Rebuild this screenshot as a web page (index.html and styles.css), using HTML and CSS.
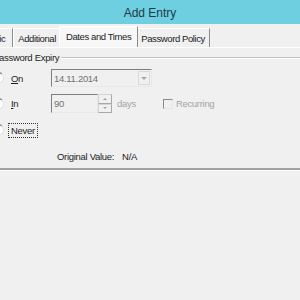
FILE: index.html
```html
<!DOCTYPE html>
<html lang="en">

<head>
    <meta charset="UTF-8">
    <title>Add Entry</title>
    <link rel="stylesheet" href="styles.css">
</head>

<body>

    <div class="titlebar">Add Entry</div>

    <div class="tabs">
        <div class="tab first">Basic</div>
        <div class="tab">Additional</div>
        <div class="tab active">Dates and Times</div>
        <div class="tab">Password Policy</div>
    </div>

    <div class="page">
        <div class="group">
            <div class="group-head">
                <span class="legend">Password Expiry</span>
                <span class="etch"></span>
            </div>

            <div class="rows">
                <span class="radio"></span>
                <span class="lbl"><u>O</u>n</span>
                <div class="ctrl">
                    <div class="combo">
                        <span class="value">14.11.2014</span>
                        <span class="drop"><span class="arrow"></span></span>
                    </div>
                </div>

                <span class="radio"></span>
                <span class="lbl"><u>I</u>n</span>
                <div class="ctrl">
                    <div class="spin">
                        <span class="value">90</span>
                    </div>
                    <div class="spin-btns">
                        <span class="sbtn"><span class="up"></span></span>
                        <span class="sbtn"><span class="down"></span></span>
                    </div>
                    <span class="days">days</span>
                    <span class="check"></span>
                    <span class="recurring">Recurring</span>
                </div>

                <span class="radio checked"></span>
                <span class="lbl"><span class="focus">Never</span></span>
                <div class="ctrl"></div>

                <div class="original">
                    <span>Original Value:</span>
                    <span>N/A</span>
                </div>
            </div>
        </div>
        <div class="group-end"></div>
    </div>

</body>

</html>
```

FILE: styles.css
```css
* {
    margin: 0;
    padding: 0;
    box-sizing: border-box;
}

body {
    width: 300px;
    height: 300px;
    overflow: hidden;
    background: #f0f0f0;
    font-family: "Liberation Sans", Arial, sans-serif;
    font-size: 9.5px;
    letter-spacing: -0.3px;
    color: #1c1c1c;
}

.titlebar {
    height: 24px;
    background: #6dcfe0;
    color: #23394a;
    font-size: 12px;
    letter-spacing: 0;
    display: flex;
    justify-content: center;
    align-items: center;
    padding-top: 1px;
}

/* tab strip */
.tabs {
    display: flex;
    align-items: flex-end;
    height: 23px;
    margin-left: -21px;
    letter-spacing: -0.4px;
}

.tab {
    height: 19px;
    padding: 1px 4px 0 4px;
    display: flex;
    align-items: center;
    border-left: 1px solid #ffffff;
    border-top: 1px solid #ffffff;
    border-right: 1px solid #8c8c8c;
}

.tab.first {
    padding-right: 7px;
}

.tab.active {
    height: 21px;
    margin: 0 -2px;
    padding: 0 6px 2px 6px;
    background: #f7f7f7;
    position: relative;
}

.page {
    border-top: 1px solid #ffffff;
}

/* group box */
.group {
    margin: 3px 0 0 -14px;
}

.group-end {
    height: 3px;
    border-top: 2px solid #a2a2a2;
    border-bottom: 1px solid #ffffff;
}

.group-head {
    display: flex;
    align-items: center;
    height: 13px;
    padding-left: 7px;
}

.legend {
    padding-right: 2px;
}

.etch {
    flex: 1;
    border-top: 1px solid #c4c4c4;
    border-bottom: 1px solid #ffffff;
}

.rows {
    display: grid;
    grid-template-columns: 12px 33px 1fr;
    grid-template-rows: 26px 25px 28px 24px;
    column-gap: 7px;
    align-items: center;
    padding-top: 1px;
    padding-left: 6px;
}

.radio {
    width: 12px;
    height: 12px;
    border-radius: 50%;
    border: 1px solid #7a7a7a;
    border-right-color: #e0e0e0;
    border-bottom-color: #e0e0e0;
    background: #ffffff;
    display: flex;
    justify-content: center;
    align-items: center;
}

.radio.checked::after {
    content: "";
    width: 4px;
    height: 4px;
    border-radius: 50%;
    background: #111;
}

.lbl u {
    text-decoration-thickness: 1px;
}

.focus {
    border: 1px dotted #333;
    padding: 1px 2px;
    margin-left: -3px;
}

.ctrl {
    display: flex;
    align-items: center;
}

.combo {
    width: 101px;
    height: 18px;
    display: flex;
    align-items: center;
    justify-content: space-between;
    border: 1px solid #e8e8e8;
    border-top-color: #7f7f7f;
    border-left-color: #7f7f7f;
    padding-left: 2px;
    color: #707070;
}

.drop {
    width: 12px;
    height: 14px;
    margin-right: 1px;
    border: 1px solid #dadada;
    display: flex;
    justify-content: center;
    align-items: center;
}

.arrow {
    border-left: 3px solid transparent;
    border-right: 3px solid transparent;
    border-top: 3px solid #a6a6a6;
}

.spin {
    width: 47px;
    height: 19px;
    display: flex;
    align-items: center;
    border: 1px solid #e8e8e8;
    border-top-color: #7f7f7f;
    border-left-color: #7f7f7f;
    padding-left: 2px;
    color: #707070;
}

.spin-btns {
    display: flex;
    flex-direction: column;
    height: 19px;
}

.sbtn {
    width: 14px;
    height: 9.5px;
    border: 1px solid #d4d4d4;
    border-right-color: #a8a8a8;
    border-bottom-color: #a8a8a8;
    display: flex;
    justify-content: center;
    align-items: center;
}

.up {
    border-left: 2px solid transparent;
    border-right: 2px solid transparent;
    border-bottom: 2px solid #a0a0a0;
}

.down {
    border-left: 2px solid transparent;
    border-right: 2px solid transparent;
    border-top: 2px solid #a0a0a0;
}

.days {
    margin-left: 5px;
    color: #a4a4a4;
}

.check {
    width: 10px;
    height: 10px;
    margin-left: 27px;
    border: 1px solid #e6e6e6;
    border-top-color: #8a8a8a;
    border-left-color: #8a8a8a;
}

.recurring {
    margin-left: 3px;
    color: #a4a4a4;
}

.original {
    grid-column: 3;
    display: flex;
    gap: 8px;
    padding-left: 6px;
}
```
